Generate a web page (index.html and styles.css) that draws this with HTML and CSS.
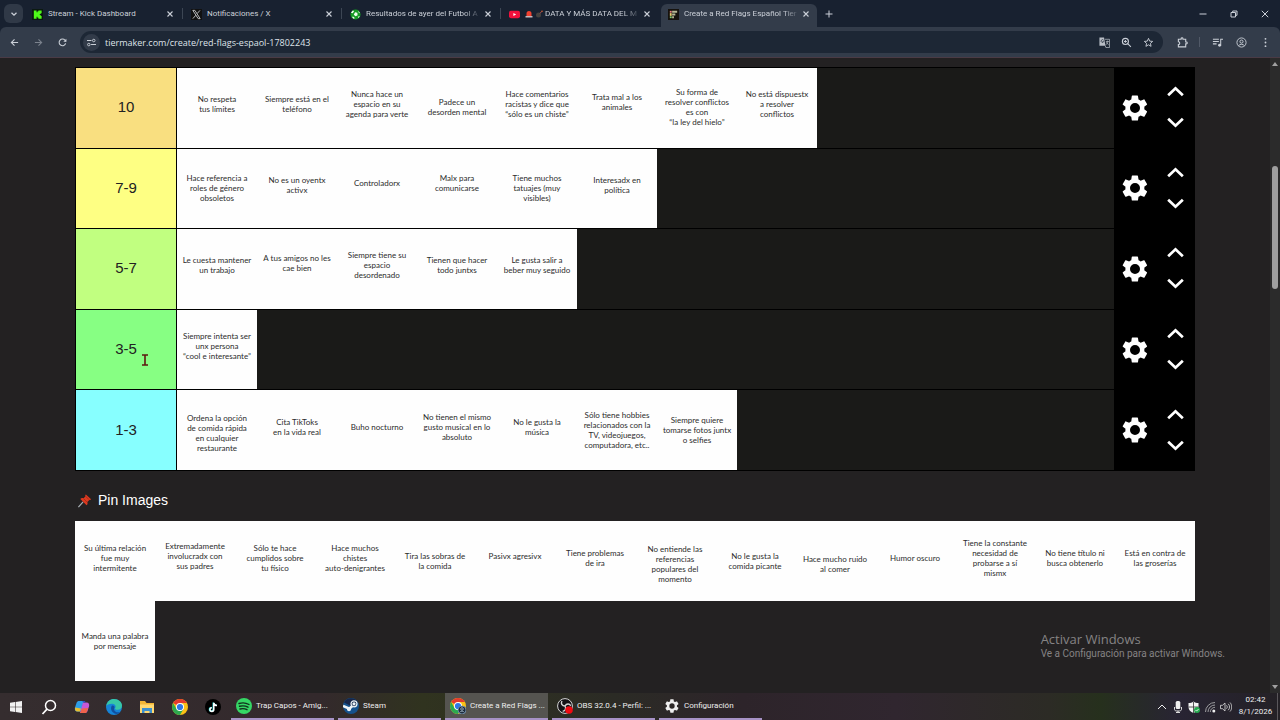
FILE: index.html
```html
<!DOCTYPE html>
<html lang="es">
<head>
    <meta charset="UTF-8">
    <meta name="viewport" content="width=device-width, initial-scale=1.0">
    <title>Create a Red Flags Español Tier List</title>
    <link rel="stylesheet" href="styles.css">
</head>
<body>
    <svg class="sprite" aria-hidden="true">
        <symbol id="close" viewBox="0 0 8 8"><path d="M1.5 1.5l5 5M6.5 1.5l-5 5" stroke="currentColor" stroke-width="1.1" fill="none"/></symbol>
        <symbol id="gear" viewBox="0 0 24 24"><path fill="currentColor" d="M19.4 13c0-.3.1-.6.1-1s0-.7-.1-1l2.1-1.600c.2-.2.2-.4.1-.6l-2-3.500c-.1-.2-.4-.3-.6-.2l-2.500 1c-.5-.4-1.100-.7-1.700-1l-.4-2.600c0-.3-.2-.5-.5-.5h-4c-.3 0-.5.2-.5.5l-.4 2.600c-.6.3-1.200.6-1.700 1l-2.500-1c-.2-.1-.5 0-.6.2l-2 3.500c-.1.2-.1.5.1.6l2.100 1.600c0 .3-.1.6-.1 1s0 .7.1 1l-2.100 1.600c-.2.2-.2.4-.1.6l2 3.500c.1.2.4.3.6.2l2.500-1c.5.4 1.100.7 1.700 1l.4 2.600c0 .3.2.5.5.5h4c.3 0 .5-.2.5-.5l.4-2.600c.6-.3 1.200-.6 1.700-1l2.500 1c.2.1.5 0 .6-.2l2-3.500c.1-.2.1-.5-.1-.6zM12 16a4 4 0 1 1 0-8 4 4 0 0 1 0 8z"/></symbol>
        <symbol id="up" viewBox="0 0 20 12"><path d="M2 10l8-7.500 8 7.500" fill="none" stroke="currentColor" stroke-width="3"/></symbol>
        <symbol id="down" viewBox="0 0 20 12"><path d="M2 2l8 7.500L18 2" fill="none" stroke="currentColor" stroke-width="3"/></symbol>
        <symbol id="chrome" viewBox="0 0 16 16">
            <circle cx="8" cy="8" r="8" fill="#fbc116"/>
            <path d="M8 8L1.100 4A8 8 0 0 1 14.900 4H8z" fill="#e33b2e"/>
            <path d="M1.100 4A8 8 0 0 0 8 16l3.500-6L8 8 4.500 10z" fill="#2da94f"/>
            <circle cx="8" cy="8" r="4" fill="#fff"/><circle cx="8" cy="8" r="3.100" fill="#2f78e6"/>
        </symbol>
    </svg>

    <header class="browser">
        <div class="tab-strip">
            <button class="tab-search" aria-label="Buscar pestañas"><svg viewBox="0 0 8 8"><path d="M1.500 2.800L4 5.200l2.500-2.400" fill="none" stroke="currentColor" stroke-width="1.300"/></svg></button>
            <div class="tabs">
                <div class="tab">
                    <svg class="favicon" viewBox="0 0 12 12"><rect width="12" height="12" fill="#0b1a10"/><path d="M2 1.500h3v2h1v-1h1v-1h3.500v3h-1v1h-1v1h1v1h1v3H7v-1H6v-1H5v2H2z" fill="#4ffb19"/></svg>
                    <span class="tab-title">Stream - Kick Dashboard</span>
                    <button class="tab-close" aria-label="Cerrar"><svg><use href="#close"/></svg></button>
                </div>
                <div class="tab">
                    <svg class="favicon" viewBox="0 0 12 12"><rect width="12" height="12" fill="#111"/><path d="M2 1.500h2.200l5.800 9H7.800zM9.800 1.500L6.700 5M5.300 6.800L2 10.500" fill="none" stroke="#c4c6c8"/></svg>
                    <span class="tab-title">Notificaciones / X</span>
                    <button class="tab-close" aria-label="Cerrar"><svg><use href="#close"/></svg></button>
                </div>
                <div class="tab">
                    <svg class="favicon" viewBox="0 0 12 12"><circle cx="6" cy="6" r="5.500" fill="#159b24"/><path d="M5.500 3.500l2.500.7.300 2.500-2.200 1.300-2-1.600zM1 4l2-2.500 1.500.6-1.500 2.500zM9 1.500l2 3-1.500-.3zM3 8l2 1.500-.5 1.500-2-1.500zM8.500 8.500l2.300-.800-1.500 2.200z" fill="#f1fff0"/></svg>
                    <span class="tab-title faded">Resultados de ayer del Futbol A</span>
                    <button class="tab-close" aria-label="Cerrar"><svg><use href="#close"/></svg></button>
                </div>
                <div class="tab">
                    <svg class="favicon" viewBox="0 0 12 12"><rect y="2" width="12" height="8" rx="2" fill="#f0103c"/><path d="M4.800 4.300v3.400L7.800 6z" fill="#fff"/></svg>
                    <span class="tab-title faded">
                        <svg class="tab-emoji" viewBox="0 0 8 8"><path d="M1.500 6V3.500a2.500 2.500 0 0 1 5 0V6z" fill="#f0402f"/><path d="M.5 6h7v1.500h-7z" fill="#c7b9bd"/></svg>
                        <svg class="tab-emoji" viewBox="0 0 8 8"><circle cx="3.500" cy="5" r="2.500" fill="#45423f"/><path d="M5 3.500l1.500-2" stroke="#a55" fill="none"/><circle cx="7" cy="1.200" r=".8" fill="#d85d30"/></svg>
                        DATA Y MÁS DATA DEL M
                    </span>
                    <button class="tab-close" aria-label="Cerrar"><svg><use href="#close"/></svg></button>
                </div>
                <div class="tab active">
                    <svg class="favicon" viewBox="0 0 12 12"><rect width="12" height="12" fill="#15120d"/><path d="M2 2h2v2H2z" fill="#e98080"/><path d="M2 4.500h2v3H2z" fill="#e9ca71"/><path d="M2 8h2v2H2z" fill="#81c870"/><path d="M4.500 2H10v2H4.500zM4.500 5H8v2H4.500zM4.500 8h2v2h-2z" fill="#b7b895"/></svg>
                    <span class="tab-title faded">Create a Red Flags Español Tier</span>
                    <button class="tab-close" aria-label="Cerrar"><svg><use href="#close"/></svg></button>
                </div>
            </div>
            <button class="new-tab" aria-label="Nueva pestaña"><svg viewBox="0 0 8 8"><path d="M4 .5v7M.5 4h7" stroke="currentColor" fill="none"/></svg></button>
            <div class="window-buttons">
                <button aria-label="Minimizar"><svg viewBox="0 0 8 8"><path d="M.5 4h7" stroke="currentColor" fill="none"/></svg></button>
                <button aria-label="Restaurar"><svg viewBox="0 0 8 8"><path d="M1 2.500h4.500V7H1zM2.700 2.500V1H7v4.300H5.500" stroke="currentColor" fill="none"/></svg></button>
                <button aria-label="Cerrar ventana"><svg viewBox="0 0 8 8"><path d="M.8.8l6.400 6.400M7.200.8L.8 7.200" stroke="currentColor" fill="none"/></svg></button>
            </div>
        </div>
        <div class="toolbar">
            <div class="nav-buttons">
                <button aria-label="Atrás"><svg viewBox="0 0 10 10"><path d="M9 5H1.500M5 1.500L1.500 5 5 8.500" stroke="currentColor" stroke-width="1.200" fill="none"/></svg></button>
                <button class="dim" aria-label="Adelante"><svg viewBox="0 0 10 10"><path d="M1 5h7.500M5 1.500L8.500 5 5 8.500" stroke="currentColor" stroke-width="1.200" fill="none"/></svg></button>
                <button aria-label="Recargar"><svg viewBox="0 0 10 10"><path d="M8.500 6A3.700 3.700 0 1 1 7.800 2.500L9 3.700" stroke="currentColor" stroke-width="1.200" fill="none"/><path d="M9.300.8v3.400H5.900z" fill="currentColor"/></svg></button>
            </div>
            <div class="omnibox">
                <button class="site-info" aria-label="Información del sitio"><svg viewBox="0 0 10 10"><path d="M0 2.800h5M4.500 7.300H10" stroke="currentColor" stroke-width="1.200"/><circle cx="7.500" cy="2.800" r="1.400" fill="none" stroke="currentColor"/><circle cx="2" cy="7.300" r="1.400" fill="none" stroke="currentColor"/></svg></button>
                <input class="url" type="text" aria-label="Dirección" value="tiermaker.com/create/red-flags-espaol-17802243">
                <button aria-label="Traducir"><svg viewBox="0 0 12 12"><path d="M.5.5h5l1.500 9H.5z" fill="#b9bec6"/><path d="M5 3.500a1.500 1.500 0 1 0 .2 1.500H3.800" stroke="#323b49" stroke-width=".9" fill="none"/><path d="M6.500 2.500h5v9h-4l-.7-2M7.500 5h3.500M9.200 4v1c0 2-.8 3-2 3.500M8 6l2.500 2.500" stroke="#b9bec6" stroke-width=".8" fill="none"/></svg></button>
                <button aria-label="Zoom"><svg viewBox="0 0 12 12"><circle cx="4.800" cy="4.800" r="3.300" stroke="currentColor" stroke-width="1.200" fill="none"/><path d="M7.300 7.300l3.500 3.500M3.200 4.800h3.200M4.800 3.200v3.200" stroke="currentColor" stroke-width="1.100"/></svg></button>
                <button aria-label="Favorito"><svg viewBox="0 0 12 12"><path d="M6 1.500l1.300 3 3.200.3L8.100 7l.7 3.200L6 8.500l-2.800 1.700L3.900 7 1.500 4.800l3.200-.3z" stroke="currentColor" fill="none"/></svg></button>
            </div>
            <div class="toolbar-actions">
                <button aria-label="Extensiones"><svg viewBox="0 0 12 12"><path d="M1.500 2.500h3V1.800a1 1 0 0 1 2 0v.7h3v3h.7a1 1 0 0 1 0 2h-.7v3.300h-8V8.200c2 0 2-3 0-3z" stroke="currentColor" stroke-width="1.200" fill="none"/></svg></button>
                <span class="divider"></span>
                <button aria-label="Multimedia"><svg viewBox="0 0 12 12"><path d="M1 2.500h6.500M1 5h6.500M1 7.500h4M9.500 9V2.500H12" stroke="currentColor" stroke-width="1.100" fill="none"/><circle cx="8.300" cy="9" r="1.600" fill="currentColor"/></svg></button>
                <button aria-label="Perfil"><svg viewBox="0 0 12 12"><circle cx="6" cy="6" r="5" stroke="currentColor" fill="none"/><circle cx="6" cy="5" r="1.700" stroke="currentColor" fill="none"/><path d="M2.700 9.500c1.800-2 4.800-2 6.600 0" stroke="currentColor" fill="none"/></svg></button>
                <button aria-label="Menú"><svg viewBox="0 0 12 12"><circle cx="6" cy="2" r="1"/><circle cx="6" cy="6" r="1"/><circle cx="6" cy="10" r="1"/></svg></button>
            </div>
        </div>
    </header>

    <div class="viewport">
        <main class="page">
            <section class="tiers">
                <div class="tier">
                    <div class="label gold">10</div>
                    <div class="items">
                        <div class="card">No respeta<br>tus límites</div>
                        <div class="card">Siempre está en el<br>teléfono</div>
                        <div class="card">Nunca hace un<br>espacio en su<br>agenda para verte</div>
                        <div class="card mid">Padece un<br>desorden mental</div>
                        <div class="card">Hace comentarios<br>racistas y dice que<br>“sólo es un chiste”</div>
                        <div class="card high">Trata mal a los<br>animales</div>
                        <div class="card mid">Su forma de<br>resolver conflictos<br>es con<br>“la ley del hielo”</div>
                        <div class="card">No está dispuestx<br>a resolver<br>conflictos</div>
                    </div>
                    <div class="controls">
                        <button class="settings" aria-label="Ajustes"><svg><use href="#gear"/></svg></button>
                        <div class="arrows"><button aria-label="Subir"><svg><use href="#up"/></svg></button><button aria-label="Bajar"><svg><use href="#down"/></svg></button></div>
                    </div>
                </div>
                <div class="tier">
                    <div class="label yellow">7-9</div>
                    <div class="items">
                        <div class="card mid">Hace referencia a<br>roles de género<br>obsoletos</div>
                        <div class="card">No es un oyentx<br>activx</div>
                        <div class="card high">Controladorx</div>
                        <div class="card high">Malx para<br>comunicarse</div>
                        <div class="card mid">Tiene muchos<br>tatuajes (muy<br>visibles)</div>
                        <div class="card">Interesadx en<br>política</div>
                    </div>
                    <div class="controls">
                        <button class="settings" aria-label="Ajustes"><svg><use href="#gear"/></svg></button>
                        <div class="arrows"><button aria-label="Subir"><svg><use href="#up"/></svg></button><button aria-label="Bajar"><svg><use href="#down"/></svg></button></div>
                    </div>
                </div>
                <div class="tier">
                    <div class="label lime">5-7</div>
                    <div class="items">
                        <div class="card">Le cuesta mantener<br>un trabajo</div>
                        <div class="card high">A tus amigos no les<br>cae bien</div>
                        <div class="card">Siempre tiene su<br>espacio<br>desordenado</div>
                        <div class="card">Tienen que hacer<br>todo juntxs</div>
                        <div class="card">Le gusta salir a<br>beber muy seguido</div>
                    </div>
                    <div class="controls">
                        <button class="settings" aria-label="Ajustes"><svg><use href="#gear"/></svg></button>
                        <div class="arrows"><button aria-label="Subir"><svg><use href="#up"/></svg></button><button aria-label="Bajar"><svg><use href="#down"/></svg></button></div>
                    </div>
                </div>
                <div class="tier">
                    <div class="label green">3-5
                        <svg class="text-cursor" viewBox="0 0 8 12"><path d="M1 1h6M1 11h6M4 1v10" stroke="#5e1a10" stroke-width="1.600" fill="none"/></svg>
                    </div>
                    <div class="items">
                        <div class="card">Siempre intenta ser<br>unx persona<br>“cool e interesante”</div>
                    </div>
                    <div class="controls">
                        <button class="settings" aria-label="Ajustes"><svg><use href="#gear"/></svg></button>
                        <div class="arrows"><button aria-label="Subir"><svg><use href="#up"/></svg></button><button aria-label="Bajar"><svg><use href="#down"/></svg></button></div>
                    </div>
                </div>
                <div class="tier">
                    <div class="label cyan">1-3</div>
                    <div class="items">
                        <div class="card low">Ordena la opción<br>de comida rápida<br>en cualquier<br>restaurante</div>
                        <div class="card">Cita TikToks<br>en la vida real</div>
                        <div class="card">Buho nocturno</div>
                        <div class="card">No tienen el mismo<br>gusto musical en lo<br>absoluto</div>
                        <div class="card">No le gusta la<br>música</div>
                        <div class="card mid">Sólo tiene hobbies<br>relacionados con la<br>TV, videojuegos,<br>computadora, etc..</div>
                        <div class="card mid">Siempre quiere<br>tomarse fotos juntx<br>o selfies</div>
                    </div>
                    <div class="controls">
                        <button class="settings" aria-label="Ajustes"><svg><use href="#gear"/></svg></button>
                        <div class="arrows"><button aria-label="Subir"><svg><use href="#up"/></svg></button><button aria-label="Bajar"><svg><use href="#down"/></svg></button></div>
                    </div>
                </div>
            </section>

            <h2 class="pin-title">
                <svg viewBox="0 0 16 16"><path d="M6.500 9.500L1.500 15" stroke="#a9b1b5" stroke-width="1.300"/><path d="M9.500 1.500l5.200 5c.4.700-.6 1.300-1.500.9L11 9.500c.6 1.700.2 3-.8 3.500L3.500 6.400c.8-1 2.200-1.200 3.600-.7L9 3.500c-.4-1 0-1.900.5-2z" fill="#dc3a20"/><path d="M7 6l3.500 3.500M9.300 3.600l3.400 3.500" stroke="#9e2416" stroke-width=".8"/></svg>
                Pin Images
            </h2>
            <section class="pool">
                <div class="card">Su última relación<br>fue muy<br>intermitente</div>
                <div class="card high">Extremadamente<br>involucradx con<br>sus padres</div>
                <div class="card">Sólo te hace<br>cumplidos sobre<br>tu físico</div>
                <div class="card">Hace muchos<br>chistes<br>auto-denigrantes</div>
                <div class="card mid">Tira las sobras de<br>la comida</div>
                <div class="card high">Pasivx agresivx</div>
                <div class="card">Tiene problemas<br>de ira</div>
                <div class="card low">No entiende las<br>referencias<br>populares del<br>momento</div>
                <div class="card mid">No le gusta la<br>comida picante</div>
                <div class="card low">Hace mucho ruido<br>al comer</div>
                <div class="card">Humor oscuro</div>
                <div class="card">Tiene la constante<br>necesidad de<br>probarse a sí<br>mismx</div>
                <div class="card">No tiene título ni<br>busca obtenerlo</div>
                <div class="card">Está en contra de<br>las groserías</div>
                <div class="card mid">Manda una palabra<br>por mensaje</div>
            </section>
        </main>
        <div class="scrollbar">
            <svg viewBox="0 0 6 4"><path d="M0 4l3-4 3 4z"/></svg>
            <div class="thumb"></div>
            <svg viewBox="0 0 6 4"><path d="M0 0l3 4 3-4z"/></svg>
        </div>
        <div class="watermark">
            <p class="watermark-title">Activar Windows</p>
            <p>Ve a Configuración para activar Windows.</p>
        </div>
    </div>

    <footer class="taskbar">
        <div class="pinned">
            <button aria-label="Inicio"><svg class="small" viewBox="0 0 12 12"><path d="M0 1.700l5-.7v4.700H0zM5.600.9L12 0v5.700H5.600zM0 6.300h5V11l-5-.7zM5.600 6.300H12V12l-6.400-.9z" fill="#f2f2f2"/></svg></button>
            <button aria-label="Buscar"><svg viewBox="0 0 16 16"><circle cx="9.500" cy="6.500" r="5" stroke="#fff" stroke-width="1.500" fill="none"/><path d="M6 10.200L1.500 15" stroke="#fff" stroke-width="1.700"/></svg></button>
            <button aria-label="Copilot"><svg viewBox="0 0 16 16"><path d="M5 2h5l-3 10.500H3.500C1 12.500.4 10.500 1 8.500l1.500-4.500C3 2.500 4 2 5 2z" fill="#2d9de8"/><path d="M1.200 8.500L7 9.500l-1 3H3.500c-2 0-2.900-1.600-2.300-4z" fill="#e6bd2f"/><path d="M9 3.500h3.500c2.500 0 3 2 2.500 4L13.500 12c-.5 1.500-1.500 2-2.500 2H6z" fill="#c458d6"/><path d="M8 9.500l6-.5-.8 3c-.4 1.500-1.200 2-2.200 2H6z" fill="#f0634c"/><path d="M8 2h2c1 0 1.500.7 1.800 1.500H9.500z" fill="#2756c8"/></svg></button>
            <button aria-label="Edge"><svg viewBox="0 0 16 16"><circle cx="8" cy="8" r="8" fill="#1684d8"/><path d="M.3 7C1 2.500 4.300 0 8 0c4.500 0 8 3 8 6.500 0 2.800-2 4.300-4.500 4.300-2 0-3-.8-2.300-1.800C10.500 7 8.700 4.800 6 4.800 3.500 4.800 1.500 5.700.3 7z" fill="#37c7a6"/><path d="M6 6.500c-2 2.500-1 7.500 4.500 8.500 1.500 0 3-.7 4-2-5 1.500-7.500-2-6-4.500.3-1-.7-2.500-2.500-2z" fill="#114f9f"/></svg></button>
            <button aria-label="Explorador"><svg viewBox="0 0 16 16"><path d="M1 2h5l1.500 2H15v10H1z" fill="#f2b636"/><path d="M1 5.500h14V14H1z" fill="#ffd971"/><path d="M3 9h10v5h-2.500v-2h-5v2H3z" fill="#3d91cf"/></svg></button>
            <button aria-label="Chrome"><svg><use href="#chrome"/></svg></button>
            <button aria-label="TikTok"><svg viewBox="0 0 16 16"><circle cx="8" cy="8" r="8" fill="#000"/><path d="M8.300 3.500v6.800a1.900 1.900 0 1 1-1.900-1.900M8.300 3.500c.3 1.800 1.500 2.700 3.200 2.800" stroke="#26e4e0" stroke-width="1.500" fill="none"/><path d="M8.800 3.800v6.800a1.900 1.900 0 1 1-1.900-1.900M8.800 3.800c.3 1.800 1.500 2.700 3.200 2.800" stroke="#fff" stroke-width="1.500" fill="none"/></svg></button>
        </div>
        <div class="tasks">
            <button class="task"><svg viewBox="0 0 16 16"><circle cx="8" cy="8" r="8" fill="#35d765"/><path d="M3 5.500c3.500-1 7-.7 10 1M3.500 8.300c3-.8 6-.5 8.500.9M4 11c2.500-.7 5-.4 7 .7" stroke="#10301b" stroke-width="1.400" stroke-linecap="round" fill="none"/></svg><span>Trap Capos - Amig...</span></button>
            <button class="task"><svg viewBox="0 0 16 16"><circle cx="8" cy="8" r="8" fill="#15528c"/><path d="M1 4.500A8 8 0 0 1 15 4.500L8 8z" fill="#17274a"/><path d="M0 8l6 2.500M6 11l5-4.500" stroke="#eef4f7" stroke-width="2.500"/><circle cx="11" cy="5.800" r="3" fill="#1b3153" stroke="#eef4f7" stroke-width="1.200"/><circle cx="11" cy="5.800" r="1.600" fill="#eef4f7"/><circle cx="6" cy="11.200" r="2" fill="#eef4f7"/></svg><span>Steam</span></button>
            <button class="task current"><svg viewBox="0 0 16 16"><use href="#chrome"/><circle cx="12" cy="12" r="4" fill="#1c2b3d" stroke="#7898b8" stroke-width=".8"/><circle cx="12" cy="11" r="1.300" fill="none" stroke="#b8cee0" stroke-width=".7"/><path d="M9.700 14.300c1-1.500 3.600-1.500 4.600 0" fill="none" stroke="#b8cee0" stroke-width=".7"/></svg><span>Create a Red Flags ...</span></button>
            <button class="task"><svg viewBox="0 0 16 16"><circle cx="8" cy="8" r="7.400" fill="#141216" stroke="#d5d5d5"/><path d="M8 8C5 8 3.500 5.500 5 3M8 8c1.500-2.600 4.500-2.600 5.700-.3M8 8c1.500 2.600.2 5-2.300 5.200" stroke="#d5d5d5" stroke-width="1.400" fill="none"/><circle cx="12" cy="12" r="3.800" fill="#f00a12"/></svg><span>OBS 32.0.4 - Perfil: ...</span></button>
            <button class="task"><svg class="cog"><use href="#gear"/></svg><span>Configuración</span></button>
        </div>
        <div class="tray">
            <button aria-label="Iconos ocultos"><svg viewBox="0 0 12 12"><path d="M2 8l4-4 4 4" stroke="#eee" fill="none"/></svg></button>
            <button aria-label="Micrófono"><svg viewBox="0 0 12 12"><rect x="3.700" y="0" width="4.600" height="8" rx="1.500" fill="#eee"/><path d="M2.500 6v2.500c0 1 1 1.500 3.500 1.500s3.500-.5 3.500-1.500V6M6 10v2M4 11.500h4" stroke="#ddd" fill="none"/></svg></button>
            <button aria-label="Seguridad"><svg viewBox="0 0 12 12"><path d="M5.500.5C7 1.500 8.500 2 10.500 2v4c0 3-2 4.700-5 6-3-1.300-5-3-5-6V2c2 0 3.500-.5 5-1.500z" fill="#f4f4f4"/><path d="M5.500 1v11M.5 6h10" stroke="#333" stroke-width=".8"/><circle cx="9" cy="9" r="3" fill="#25a94e"/><path d="M7.500 9l1.100 1.100 2-2.100" stroke="#fff" stroke-width=".8" fill="none"/></svg></button>
            <button aria-label="Red"><svg viewBox="0 0 12 12"><path d="M1.500 11A9.500 9.500 0 0 1 11 1.500M4 11a7 7 0 0 1 7-7M6.300 11A4.700 4.700 0 0 1 11 6.300" stroke="#9c9c9f" fill="none"/><circle cx="9.800" cy="10" r="1.500" fill="#eee"/></svg></button>
            <button aria-label="Volumen"><svg viewBox="0 0 12 12"><path d="M.5 4.300h2L5 2v8L2.500 7.700h-2zM6.500 4.300c1 1 1 2.400 0 3.400M8.200 2.800c1.800 1.800 1.800 4.600 0 6.400M10 1.500c2.300 2.500 2.300 6.500 0 9" stroke="#ddd" stroke-width=".8" fill="none"/></svg></button>
            <div class="clock"><time>02:42</time><time>8/1/2026</time></div>
        </div>
    </footer>
</body>
</html>
```

FILE: styles.css
```css
* {
    box-sizing: border-box;
}
body {
    margin: 0;
    height: 100vh;
    display: flex;
    flex-direction: column;
    overflow: hidden;
    background: #232122;
    font-family: Roboto, "Noto Sans", sans-serif;
}
button {
    display: flex;
    align-items: center;
    justify-content: center;
    padding: 0;
    border: 0;
    background: none;
    color: inherit;
    font: inherit;
}
svg {
    display: block;
    flex: none;
}
.sprite {
    position: absolute;
    width: 0;
    height: 0;
}

/* browser window */
.browser {
    flex: none;
    color: #cbd0d8;
    background: #182130;
}
.tab-strip {
    display: flex;
    align-items: center;
    height: 27px;
    padding-left: 4px;
}
.tab-search {
    width: 19px;
    height: 19px;
    border-radius: 6px;
    background: #303947;
}
.tab-search svg,
.tab-close svg,
.new-tab svg,
.window-buttons svg {
    width: 8px;
    height: 8px;
}
.tabs {
    display: flex;
    align-self: stretch;
    gap: 3px;
    padding: 4px 0 0 2px;
}
.tab {
    position: relative;
    display: flex;
    align-items: center;
    gap: 5px;
    width: 156px;
    padding: 0 6px 3px 7px;
    font-size: 8px;
}
.tab:nth-child(-n+3)::after {
    content: "";
    position: absolute;
    right: -2px;
    top: 4px;
    width: 1px;
    height: 11px;
    background: #3c4654;
}
.tab.active {
    border-radius: 6px 6px 0 0;
    background: #333c4a;
}
.favicon {
    width: 11px;
    height: 11px;
}
.tab-title {
    flex: 1;
    white-space: nowrap;
    line-height: 12px;
}
.tab-title.faded {
    -webkit-mask-image: linear-gradient(90deg, #000 88%, rgba(0, 0, 0, 0.2));
    mask-image: linear-gradient(90deg, #000 88%, rgba(0, 0, 0, 0.2));
}
.tab-emoji {
    display: inline-block;
    width: 8px;
    height: 8px;
    vertical-align: middle;
}
.tab-close {
    width: 10px;
    height: 12px;
}
.new-tab {
    width: 24px;
    height: 20px;
}
.window-buttons {
    display: flex;
    margin-left: auto;
}
.window-buttons button {
    width: 31px;
    height: 27px;
}
.toolbar {
    display: flex;
    align-items: center;
    height: 31px;
    padding: 0 3px 0 2px;
    border-bottom: 1px solid #4a3b45;
    border-radius: 6px 6px 0 0;
    background: #333c4a;
}
.nav-buttons {
    display: flex;
    width: 78px;
}
.nav-buttons button {
    width: 24px;
    height: 24px;
}
.nav-buttons svg {
    width: 9px;
    height: 9px;
}
.dim {
    color: #7b828d;
}
.omnibox {
    flex: 1;
    display: flex;
    align-items: center;
    height: 22px;
    padding: 0 4px 0 3px;
    border-radius: 11px;
    background: #1d2735;
}
.omnibox button {
    width: 22px;
    height: 22px;
}
.omnibox svg,
.toolbar-actions svg {
    width: 11px;
    height: 11px;
    fill: currentColor;
}
.omnibox .site-info {
    width: 17px;
    height: 17px;
    border-radius: 50%;
    background: #323b49;
}
.omnibox .site-info svg {
    width: 9px;
    height: 9px;
}
.url {
    flex: 1;
    min-width: 0;
    padding: 0 5px;
    border: 0;
    outline: 0;
    background: none;
    color: #dfe3e9;
    font-family: "Open Sans", "Noto Sans", sans-serif;
    font-size: 9px;
}
.toolbar-actions {
    display: flex;
    align-items: center;
    padding-left: 7px;
}
.toolbar-actions button {
    width: 24px;
    height: 22px;
}
.divider {
    width: 1px;
    height: 10px;
    margin: 0 5px;
    background: #515967;
}

/* tier list */
.viewport {
    position: relative;
    flex: 1;
    min-height: 0;
    display: flex;
    overflow: hidden;
}
.page {
    flex: 1;
    padding-top: 9px;
    font-family: "Liberation Sans", Arial, sans-serif;
}
.tiers,
.pin-title,
.pool {
    max-width: 1120px;
    margin: 0 auto;
}
.tiers {
    display: grid;
    grid-auto-rows: 1fr;
    height: 404px;
    border-top: 1px solid #000;
    border-left: 1px solid #000;
    background: #1a1a18;
}
.tier {
    display: flex;
    border-bottom: 1px solid #000;
}
.label {
    position: relative;
    display: flex;
    align-items: center;
    justify-content: center;
    width: 101px;
    padding-bottom: 2px;
    border-right: 1px solid #000;
    font-size: 15px;
    color: #222;
}
.gold { background: #f9df80; }
.yellow { background: #feff83; }
.lime { background: #c1ff80; }
.green { background: #87ff83; }
.cyan { background: #87ffff; }
.text-cursor {
    position: absolute;
    left: 65px;
    top: 44px;
    width: 8px;
    height: 12px;
}
.items {
    flex: 1;
    display: flex;
}
.card {
    display: flex;
    align-items: center;
    justify-content: center;
    width: 80px;
    padding-bottom: 7px;
    background: #fefefe;
    color: #2c2c2c;
    font-family: Lato, "Open Sans", sans-serif;
    font-size: 8px;
    line-height: 10px;
    text-align: center;
    white-space: nowrap;
}
.card.high {
    padding-bottom: 11px;
}
.card.mid {
    padding-bottom: 1px;
}
.card.low {
    padding: 5px 0 0;
}
.controls {
    display: flex;
    width: 81px;
    background: #000;
    color: #fff;
}
.controls button {
    width: 40px;
}
.controls .settings {
    width: 41px;
}
.settings svg {
    width: 30px;
    height: 30px;
}
.arrows {
    display: flex;
    flex-direction: column;
    justify-content: center;
    gap: 20px;
    padding-bottom: 1px;
}
.arrows svg {
    width: 19px;
    height: 11px;
}
.pin-title {
    display: flex;
    align-items: center;
    gap: 6px;
    padding: 19px 2px 11px;
    color: #fff;
    font-size: 14px;
    font-weight: normal;
    line-height: 20px;
}
.pin-title svg {
    width: 15px;
    height: 15px;
}
.pool {
    display: flex;
    flex-wrap: wrap;
}
.pool .card {
    height: 80px;
}
.scrollbar {
    position: relative;
    display: flex;
    flex-direction: column;
    align-items: center;
    justify-content: space-between;
    width: 10px;
    padding: 4px 0;
    background: #2b2b2b;
}
.scrollbar svg {
    width: 6px;
    height: 4px;
    fill: #a0a0a0;
}
.thumb {
    position: absolute;
    top: 17%;
    left: 2px;
    width: 6px;
    height: 123px;
    border-radius: 3px;
    background: #9f9f9f;
}
.watermark {
    position: absolute;
    right: 55px;
    bottom: 32px;
    color: #858384;
    font-size: 10px;
    line-height: 14px;
}
.watermark p {
    margin: 0;
}
.watermark .watermark-title {
    font-family: "Open Sans", "Noto Sans", sans-serif;
    font-size: 13px;
    line-height: 16px;
}

/* windows taskbar */
.taskbar {
    flex: none;
    display: flex;
    height: 27px;
    background: linear-gradient(90deg, #352d2f, #33292c 25%, #30331f 33%, #2b2b25 48%, #2d242a 58%, #30262f 70%, #2c2b25 82%, #26301d 86%, #282433 92%, #242126);
    color: #eee;
    font-size: 8px;
}
.pinned {
    display: grid;
    grid-template-columns: repeat(7, 1fr);
    width: 229px;
}
.pinned svg,
.task svg {
    width: 16px;
    height: 16px;
}
.pinned .small {
    width: 12px;
    height: 12px;
}
.tasks {
    display: flex;
    gap: 4px;
    padding-left: 2px;
}
.task {
    justify-content: flex-start;
    gap: 4px;
    width: 103px;
    padding-left: 5px;
    border-bottom: 2px solid #a792c6;
    white-space: nowrap;
}
.task.current {
    background: #555450;
}
.task .cog {
    width: 16px;
    height: 16px;
}
.tray {
    display: flex;
    margin-left: auto;
    padding-right: 2px;
}
.tray button {
    width: 16px;
}
.tray svg {
    width: 12px;
    height: 12px;
}
.clock {
    display: flex;
    flex-direction: column;
    align-items: center;
    width: 44px;
    padding-top: 1px;
    border-right: 1px solid #5a575b;
    line-height: 12px;
}
```
